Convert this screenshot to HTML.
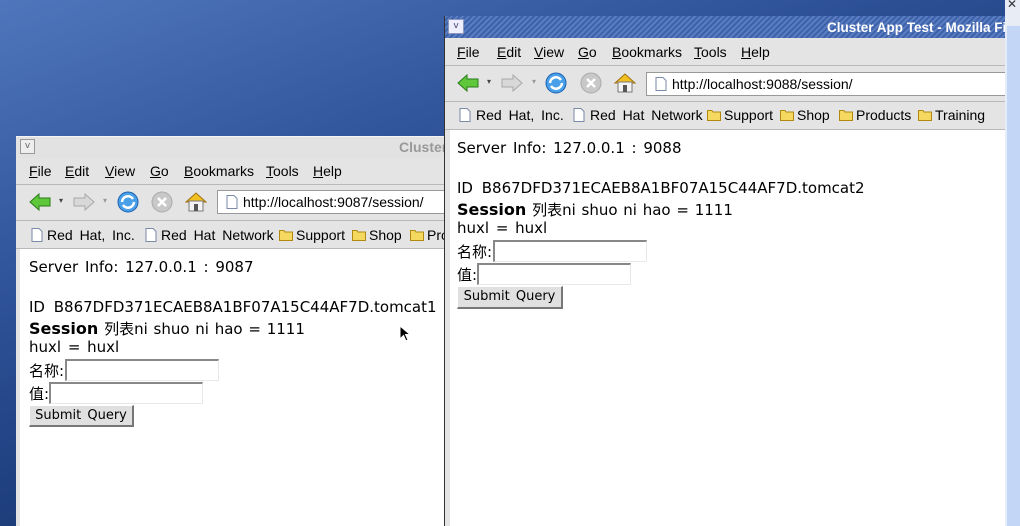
<!DOCTYPE html>
<html><head><meta charset="utf-8"><style>
*{margin:0;padding:0;box-sizing:border-box}
body{width:1020px;height:526px;overflow:hidden;position:relative;background:linear-gradient(160deg,#4f76bc 0%,#2d5096 35%,#123068 75%,#0c2558 100%);font-family:"DejaVu Sans","Liberation Sans","Noto Sans CJK SC",sans-serif}
.a{position:absolute;white-space:nowrap}
.win{position:absolute;overflow:hidden;background:#e4e4e4}
.menu{font-size:14px;color:#000;font-family:"Liberation Sans",sans-serif}
.menu u{text-decoration:underline}
.bm{font-size:14px;color:#000;font-family:"Liberation Sans",sans-serif;word-spacing:3px}
.c{font-size:15px;color:#000;word-spacing:2px}
.inp{position:absolute;background:#fff;border:1px solid #e8e8e8;border-top:2px solid #888;border-left:2px solid #888}
.btn{position:absolute;background:#e0e0e0;border:1px solid #fff;border-right:2px solid #777;border-bottom:2px solid #777;font-size:13px;text-align:center;line-height:19px;word-spacing:2px}
.url{position:absolute;background:#fff;border:1px solid #999;font-size:14px;line-height:22px;font-family:"Liberation Sans",sans-serif}
.sep{position:absolute;left:0;right:0;height:1px;background:#b8b8b8}
.title{font-family:"Liberation Sans",sans-serif;font-size:14px;font-weight:bold}
</style></head><body>

<svg width="0" height="0" style="position:absolute">
<defs>
<symbol id="back" viewBox="0 0 24 24"><path d="M2 12 L11 4 L11 8 L22 8 L22 16 L11 16 L11 20 Z" fill="#5ec83a" stroke="#2a7a18" stroke-width="1"/></symbol>
<symbol id="fwd" viewBox="0 0 24 24"><path d="M22 12 L13 4 L13 8 L2 8 L2 16 L13 16 L13 20 Z" fill="#d8d8d8" stroke="#a8a8a8" stroke-width="1"/></symbol>
<symbol id="rel" viewBox="0 0 24 24"><circle cx="12" cy="12" r="10" fill="#4aa0e8" stroke="#1e60b0"/><path d="M6 12a6 6 0 0 1 11-3M18 12a6 6 0 0 1-11 3" stroke="#fff" stroke-width="2.5" fill="none"/></symbol>
<symbol id="stop" viewBox="0 0 24 24"><circle cx="12" cy="12" r="10" fill="#c8c8c8" stroke="#aaa"/><path d="M8 8L16 16M16 8L8 16" stroke="#fff" stroke-width="2.5"/></symbol>
<symbol id="home" viewBox="0 0 24 24"><path d="M2 12L12 3L22 12Z" fill="#f0c020" stroke="#a07010"/><rect x="5" y="11" width="14" height="10" fill="#f4f4f4" stroke="#777"/><rect x="10" y="14" width="4" height="7" fill="#555"/></symbol>
<symbol id="doc" viewBox="0 0 12 14"><path d="M1 0.5H8L11 3.5V13.5H1Z" fill="#fff" stroke="#7a8aa8"/></symbol>
<symbol id="fold" viewBox="0 0 14 12"><path d="M0.5 1.5H5L6 3H13.5V11.5H0.5Z" fill="#f4d860" stroke="#b08a10"/></symbol>
</defs></svg>

<!-- right edge strip -->
<div class="a" style="left:1005px;top:0;width:15px;height:26px;background:#e8ecf4"></div>
<div class="a" style="left:1007px;top:-3px;font-size:12px;color:#333">✕</div>
<div class="a" style="left:1005px;top:26px;width:15px;height:500px;background:#c4d6f6;border-left:2px solid #e6ecf8"></div>

<!-- LEFT WINDOW -->
<div class="win" style="left:16px;top:136px;width:430px;height:390px">
  <div class="a" style="left:0;top:0;width:430px;height:22px;background:#e2e2e2;border-top:1px solid #f4f4f4"></div>
  <div class="a" style="left:4px;top:3px;width:15px;height:15px;background:#eee;border:1px solid #999;font-size:9px;color:#666;text-align:center;line-height:13px">v</div>
  <div class="a title" style="left:383px;top:3px;color:#999">Cluster</div>
  <div class="a menu" style="top:27px;left:13px"><u>F</u>ile</div>
  <div class="a menu" style="top:27px;left:49px"><u>E</u>dit</div>
  <div class="a menu" style="top:27px;left:89px"><u>V</u>iew</div>
  <div class="a menu" style="top:27px;left:134px"><u>G</u>o</div>
  <div class="a menu" style="top:27px;left:168px"><u>B</u>ookmarks</div>
  <div class="a menu" style="top:27px;left:250px"><u>T</u>ools</div>
  <div class="a menu" style="top:27px;left:297px"><u>H</u>elp</div>
  <div class="sep" style="top:48px"></div>
  <svg class="a" style="left:12px;top:54px" width="24" height="24"><use href="#back"/></svg>
  <div class="a" style="left:43px;top:60px;font-size:8px;color:#444">▾</div>
  <svg class="a" style="left:56px;top:54px" width="24" height="24"><use href="#fwd"/></svg>
  <div class="a" style="left:87px;top:60px;font-size:8px;color:#999">▾</div>
  <svg class="a" style="left:100px;top:54px" width="24" height="24"><use href="#rel"/></svg>
  <svg class="a" style="left:134px;top:54px" width="24" height="24"><use href="#stop"/></svg>
  <svg class="a" style="left:168px;top:54px" width="24" height="24"><use href="#home"/></svg>
  <div class="url" style="left:201px;top:54px;width:240px;height:24px"><svg class="a" style="left:8px;top:4px" width="12" height="14"><use href="#doc"/></svg><span class="a" style="left:25px;top:0">http://localhost:9087/session/</span></div>
  <div class="sep" style="top:84px"></div>
  <svg class="a" style="left:15px;top:92px" width="12" height="14"><use href="#doc"/></svg>
  <div class="a bm" style="left:31px;top:91px">Red Hat, Inc.</div>
  <svg class="a" style="left:129px;top:92px" width="12" height="14"><use href="#doc"/></svg>
  <div class="a bm" style="left:145px;top:91px">Red Hat Network</div>
  <svg class="a" style="left:263px;top:93px" width="14" height="12"><use href="#fold"/></svg>
  <div class="a bm" style="left:280px;top:91px">Support</div>
  <svg class="a" style="left:336px;top:93px" width="14" height="12"><use href="#fold"/></svg>
  <div class="a bm" style="left:353px;top:91px">Shop</div>
  <svg class="a" style="left:394px;top:93px" width="14" height="12"><use href="#fold"/></svg>
  <div class="a bm" style="left:411px;top:91px">Products</div>
  <div class="sep" style="top:112px"></div>
  <div class="a" style="left:4px;top:113px;width:426px;height:277px;background:#fff"></div>
  <div class="a c" style="left:13px;top:122px">Server Info: 127.0.0.1 : 9087</div>
  <div class="a c" style="left:13px;top:162px;word-spacing:4px">ID B867DFD371ECAEB8A1BF07A15C44AF7D.tomcat1</div>
  <div class="a c" style="left:13px;top:182px;word-spacing:1px"><b style="font-size:16px">Session</b> 列表ni shuo ni hao = 1111</div>
  <div class="a c" style="left:13px;top:202px">huxl = huxl</div>
  <div class="a c" style="left:13px;top:224px">名称:</div>
  <div class="inp" style="left:49px;top:223px;width:154px;height:22px"></div>
  <div class="a c" style="left:13px;top:247px">值:</div>
  <div class="inp" style="left:33px;top:246px;width:154px;height:22px"></div>
  <div class="btn" style="left:13px;top:269px;width:105px;height:22px">Submit Query</div>
</div>

<!-- RIGHT WINDOW -->
<div class="win" style="left:444px;top:16px;width:561px;height:510px;border-left:1px solid #333">
  <div class="a" style="left:0;top:0;width:561px;height:22px;background:repeating-linear-gradient(135deg,#5a7cc0 0 2px,#3e62aa 2px 4px)"></div>
  <div class="a" style="left:3px;top:3px;width:16px;height:15px;background:#eef;border:1px solid #8898c0;font-size:9px;color:#446;text-align:center;line-height:13px">v</div>
  <div class="a title" style="left:382px;top:4px;color:#fff;font-size:13.5px">Cluster App Test - Mozilla Fi</div>
  <div class="a menu" style="top:28px;left:12px"><u>F</u>ile</div>
  <div class="a menu" style="top:28px;left:52px"><u>E</u>dit</div>
  <div class="a menu" style="top:28px;left:89px"><u>V</u>iew</div>
  <div class="a menu" style="top:28px;left:133px"><u>G</u>o</div>
  <div class="a menu" style="top:28px;left:167px"><u>B</u>ookmarks</div>
  <div class="a menu" style="top:28px;left:249px"><u>T</u>ools</div>
  <div class="a menu" style="top:28px;left:296px"><u>H</u>elp</div>
  <div class="sep" style="top:49px"></div>
  <svg class="a" style="left:11px;top:55px" width="24" height="24"><use href="#back"/></svg>
  <div class="a" style="left:42px;top:61px;font-size:8px;color:#444">▾</div>
  <svg class="a" style="left:55px;top:55px" width="24" height="24"><use href="#fwd"/></svg>
  <div class="a" style="left:87px;top:61px;font-size:8px;color:#999">▾</div>
  <svg class="a" style="left:99px;top:55px" width="24" height="24"><use href="#rel"/></svg>
  <svg class="a" style="left:134px;top:55px" width="24" height="24"><use href="#stop"/></svg>
  <svg class="a" style="left:168px;top:55px" width="24" height="24"><use href="#home"/></svg>
  <div class="url" style="left:201px;top:56px;width:370px;height:24px"><svg class="a" style="left:8px;top:4px" width="12" height="14"><use href="#doc"/></svg><span class="a" style="left:25px;top:0">http://localhost:9088/session/</span></div>
  <div class="sep" style="top:85px"></div>
  <svg class="a" style="left:14px;top:92px" width="12" height="14"><use href="#doc"/></svg>
  <div class="a bm" style="left:31px;top:91px">Red Hat, Inc.</div>
  <svg class="a" style="left:128px;top:92px" width="12" height="14"><use href="#doc"/></svg>
  <div class="a bm" style="left:145px;top:91px">Red Hat Network</div>
  <svg class="a" style="left:262px;top:93px" width="14" height="12"><use href="#fold"/></svg>
  <div class="a bm" style="left:279px;top:91px">Support</div>
  <svg class="a" style="left:335px;top:93px" width="14" height="12"><use href="#fold"/></svg>
  <div class="a bm" style="left:352px;top:91px">Shop</div>
  <svg class="a" style="left:394px;top:93px" width="14" height="12"><use href="#fold"/></svg>
  <div class="a bm" style="left:411px;top:91px">Products</div>
  <svg class="a" style="left:473px;top:93px" width="14" height="12"><use href="#fold"/></svg>
  <div class="a bm" style="left:490px;top:91px">Training</div>
  <div class="sep" style="top:113px"></div>
  <div class="a" style="left:5px;top:114px;width:556px;height:396px;background:#fff"></div>
  <div class="a c" style="left:12px;top:123px">Server Info: 127.0.0.1 : 9088</div>
  <div class="a c" style="left:12px;top:163px;word-spacing:4px">ID B867DFD371ECAEB8A1BF07A15C44AF7D.tomcat2</div>
  <div class="a c" style="left:12px;top:183px;word-spacing:1px"><b style="font-size:16px">Session</b> 列表ni shuo ni hao = 1111</div>
  <div class="a c" style="left:12px;top:203px">huxl = huxl</div>
  <div class="a c" style="left:12px;top:225px">名称:</div>
  <div class="inp" style="left:48px;top:224px;width:154px;height:22px"></div>
  <div class="a c" style="left:12px;top:248px">值:</div>
  <div class="inp" style="left:32px;top:247px;width:154px;height:22px"></div>
  <div class="btn" style="left:12px;top:270px;width:106px;height:23px">Submit Query</div>
</div>

<!-- cursor -->
<svg class="a" style="left:399px;top:325px" width="12" height="18"><path d="M1 1L1 14L4.5 10.5L7 16L9 15L6.5 9.5L11 9.5Z" fill="#000" stroke="#fff" stroke-width="1"/></svg>
</body></html>
